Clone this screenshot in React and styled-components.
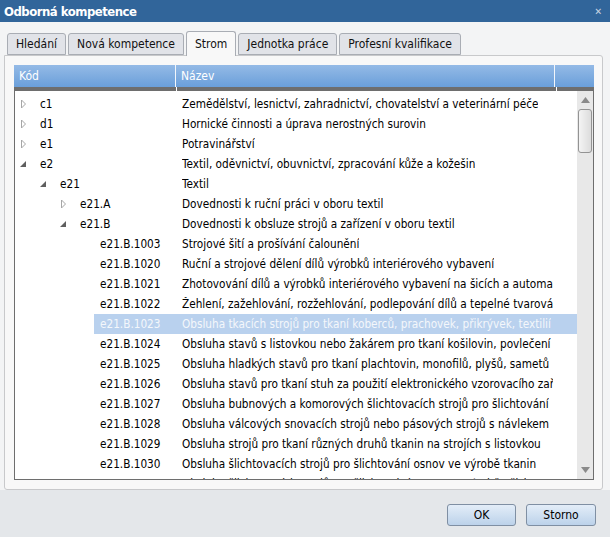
import React from 'react'
import styled, { createGlobalStyle } from 'styled-components'

const GlobalStyle = createGlobalStyle`
  html, body { margin: 0; padding: 0; }
  body { font-family: "DejaVu Sans Condensed", "DejaVu Sans", sans-serif; }
`

const tabs = ['Hledání', 'Nová kompetence', 'Strom', 'Jednotka práce', 'Profesní kvalifikace']

// level, expander ('open' | 'closed' | null), code, name, selected
const rows = [
  [0, 'closed', 'c1', 'Zemědělství, lesnictví, zahradnictví, chovatelství a veterinární péče'],
  [0, 'closed', 'd1', 'Hornické činnosti a úprava nerostných surovin'],
  [0, 'closed', 'e1', 'Potravinářství'],
  [0, 'open', 'e2', 'Textil, oděvnictví, obuvnictví, zpracování kůže a kožešin'],
  [1, 'open', 'e21', 'Textil'],
  [2, 'closed', 'e21.A', 'Dovednosti k ruční práci v oboru textil'],
  [2, 'open', 'e21.B', 'Dovednosti k obsluze strojů a zařízení v oboru textil'],
  [3, null, 'e21.B.1003', 'Strojové šití a prošívání čalounění'],
  [3, null, 'e21.B.1020', 'Ruční a strojové dělení dílů výrobků interiérového vybavení'],
  [3, null, 'e21.B.1021', 'Zhotovování dílů a výrobků interiérového vybavení na šicích a automatech'],
  [3, null, 'e21.B.1022', 'Žehlení, zažehlování, rozžehlování, podlepování dílů a tepelné tvarování'],
  [3, null, 'e21.B.1023', 'Obsluha tkacích strojů pro tkaní koberců, prachovek, přikrývek, textilií', true],
  [3, null, 'e21.B.1024', 'Obsluha stavů s listovkou nebo žakárem pro tkaní košilovin, povlečení'],
  [3, null, 'e21.B.1025', 'Obsluha hladkých stavů pro tkaní plachtovin, monofilů, plyšů, sametů'],
  [3, null, 'e21.B.1026', 'Obsluha stavů pro tkaní stuh za použití elektronického vzorovacího zařízení'],
  [3, null, 'e21.B.1027', 'Obsluha bubnových a komorových šlichtovacích strojů pro šlichtování'],
  [3, null, 'e21.B.1028', 'Obsluha válcových snovacích strojů nebo pásových strojů s návlekem'],
  [3, null, 'e21.B.1029', 'Obsluha strojů pro tkaní různých druhů tkanin na strojích s listovkou'],
  [3, null, 'e21.B.1030', 'Obsluha šlichtovacích strojů pro šlichtování osnov ve výrobě tkanin'],
  [3, null, 'e21.B.1031', 'Obsluha šlichtovacích strojů pro šlichtování osnov ve výrobě přízí'],
]

const Expander = ({ state }) => {
  if (state === 'closed') {
    return (
      <svg width="8" height="10" viewBox="0 0 8 10">
        <path d="M1.5 1 L5.5 5 L1.5 9 Z" fill="none" stroke="#a6a6a6" strokeWidth="1" />
      </svg>
    )
  }
  if (state === 'open') {
    return (
      <svg width="8" height="10" viewBox="0 0 8 10">
        <path d="M0 8 L6 2 L6 8 Z" fill="#5f5f5f" />
      </svg>
    )
  }
  return null
}

const App = () => {
  return (
    <>
      <GlobalStyle />
      <Dialog>
        <TitleBar>
          <Title>Odborná kompetence</Title>
          <Close>✕</Close>
        </TitleBar>
        <Body>
          <TabStrip>
            {tabs.map((t) => (
              <Tab key={t} $active={t === 'Strom'}>{t}</Tab>
            ))}
          </TabStrip>
          <Panel>
            <Grid>
              <Header>
                <HeadCell $w={162}>Kód</HeadCell>
                <HeadCell $w={379}>Název</HeadCell>
                <HeadCell $w={37} />
              </Header>
              <HeadRule />
              <GridBody>
                <Rows>
                  {rows.map(([level, exp, code, name, sel]) => (
                    <Row key={code}>
                      <Indent $level={level} />
                      <ExpBox><Expander state={exp} /></ExpBox>
                      <Node $selected={sel}>
                        <Code $level={level}>{code}</Code>
                        <Name>{name}</Name>
                      </Node>
                    </Row>
                  ))}
                </Rows>
                <ScrollBar>
                  <ScrollArrow>
                    <svg width="9" height="6" viewBox="0 0 9 6"><path d="M4.5 0 L9 6 L0 6 Z" fill="#8a8a8a" /></svg>
                  </ScrollArrow>
                  <Thumb />
                  <Track />
                  <ScrollArrow>
                    <svg width="9" height="6" viewBox="0 0 9 6"><path d="M0 0 L9 0 L4.5 6 Z" fill="#8a8a8a" /></svg>
                  </ScrollArrow>
                </ScrollBar>
              </GridBody>
            </Grid>
          </Panel>
        </Body>
        <Footer>
          <Button $w={69}>OK</Button>
          <Button $w={70}>Storno</Button>
        </Footer>
      </Dialog>
    </>
  )
}

export default App

const Dialog = styled.div`
  width: 610px;
  height: 537px;
  display: flex;
  flex-direction: column;
  background: #f3f4f5;
  overflow: hidden;
`

const TitleBar = styled.div`
  height: 22px;
  background: #31659a;
  display: flex;
  align-items: center;
  justify-content: space-between;
  padding: 0 8px 0 4px;
  flex-shrink: 0;
`

const Title = styled.div`
  color: #fff;
  font-weight: bold;
  font-size: 13px;
  letter-spacing: -0.5px;
`

const Close = styled.div`
  color: #c7d3e0;
  font-size: 10px;
  font-weight: bold;
`

const Body = styled.div`
  display: flex;
  flex-direction: column;
  padding: 11px 7px 0 4px;
`

const TabStrip = styled.div`
  display: flex;
  align-items: flex-end;
  gap: 2px;
  padding-left: 3px;
  height: 22px;
  position: relative;
  z-index: 1;
`

const Tab = styled.div`
  height: ${(p) => (p.$active ? '25px' : '22px')};
  box-sizing: border-box;
  padding: 0 8px;
  display: flex;
  align-items: center;
  font-size: 12px;
  color: #111;
  border: 1px solid #a9adb4;
  border-bottom: ${(p) => (p.$active ? 'none' : '1px solid #a9adb4')};
  border-radius: 3px 3px 0 0;
  background: ${(p) => (p.$active ? '#f8f8f8' : '#e1e3e8')};
  margin-bottom: ${(p) => (p.$active ? '-1px' : '0')};
  padding-bottom: ${(p) => (p.$active ? '1px' : '0')};
`

const Panel = styled.div`
  height: 435px;
  box-sizing: border-box;
  border: 1px solid #c8c9cb;
  border-radius: 0 3px 3px 3px;
  background: #f8f8f8;
  padding: 9px 8px 9px 9px;
`

const Grid = styled.div`
  display: flex;
  flex-direction: column;
  height: 100%;
`

const Header = styled.div`
  display: flex;
  height: 22px;
  background: linear-gradient(#94bae6, #6a9fda);
`

const HeadCell = styled.div`
  width: ${(p) => p.$w}px;
  flex-shrink: 0;
  border-right: 1px solid #f2f6fb;
  color: #fff;
  font-size: 12px;
  display: flex;
  align-items: center;
  padding-left: 5px;
  box-sizing: border-box;
  &:last-child { border-right: none; flex: 1; }
`

const HeadRule = styled.div`
  height: 4px;
  background: linear-gradient(to right, #6e6e6e 162px, #fff 162px, #fff 163px, #6e6e6e 163px, #6e6e6e 542px, #fff 542px, #fff 543px, #6e6e6e 543px);
`

const GridBody = styled.div`
  flex: 1;
  display: flex;
  border: 1px solid #6e6e6e;
  border-top: none;
  background: #fff;
  overflow: hidden;
`

const Rows = styled.div`
  flex: 1;
  padding-top: 3px;
  overflow: hidden;
  font-size: 11.7px;
  color: #000;
`

const Row = styled.div`
  display: flex;
  align-items: stretch;
  height: 20px;
`

const Indent = styled.div`
  width: ${(p) => p.$level * 20}px;
  flex-shrink: 0;
`

const ExpBox = styled.div`
  width: 19px;
  flex-shrink: 0;
  display: flex;
  align-items: center;
  padding-left: 5px;
  box-sizing: border-box;
`

const Node = styled.div`
  flex: 1;
  display: flex;
  align-items: center;
  padding-left: 6px;
  min-width: 0;
  background: ${(p) => (p.$selected ? '#b9d1ee' : 'transparent')};
  color: ${(p) => (p.$selected ? '#f4f7fb' : '#000')};
`

const Code = styled.div`
  width: ${(p) => 142 - p.$level * 20}px;
  flex-shrink: 0;
  white-space: nowrap;
`

const Name = styled.div`
  max-width: 371px;
  white-space: nowrap;
  overflow: hidden;
`

const ScrollBar = styled.div`
  width: 16px;
  flex-shrink: 0;
  background: #e8e8e8;
  display: flex;
  flex-direction: column;
  align-items: center;
`

const ScrollArrow = styled.div`
  height: 18px;
  display: flex;
  align-items: center;
  justify-content: center;
`

const Thumb = styled.div`
  width: 14px;
  height: 44px;
  box-sizing: border-box;
  border: 1px solid #939393;
  border-radius: 3px;
  background: linear-gradient(to right, #f4f4f4, #dcdcdc);
`

const Track = styled.div`
  flex: 1;
`

const Footer = styled.div`
  flex: 1;
  background: #e4e7ea;
  display: flex;
  justify-content: flex-end;
  align-items: flex-start;
  gap: 10px;
  padding: 14px 14px 0 0;
`

const Button = styled.div`
  width: ${(p) => p.$w}px;
  height: 22px;
  box-sizing: border-box;
  border: 1px solid #7f8fa3;
  border-radius: 3px;
  background: linear-gradient(#e3edf8, #bcd2ea);
  display: flex;
  align-items: center;
  justify-content: center;
  font-size: 12px;
  color: #000;
`
